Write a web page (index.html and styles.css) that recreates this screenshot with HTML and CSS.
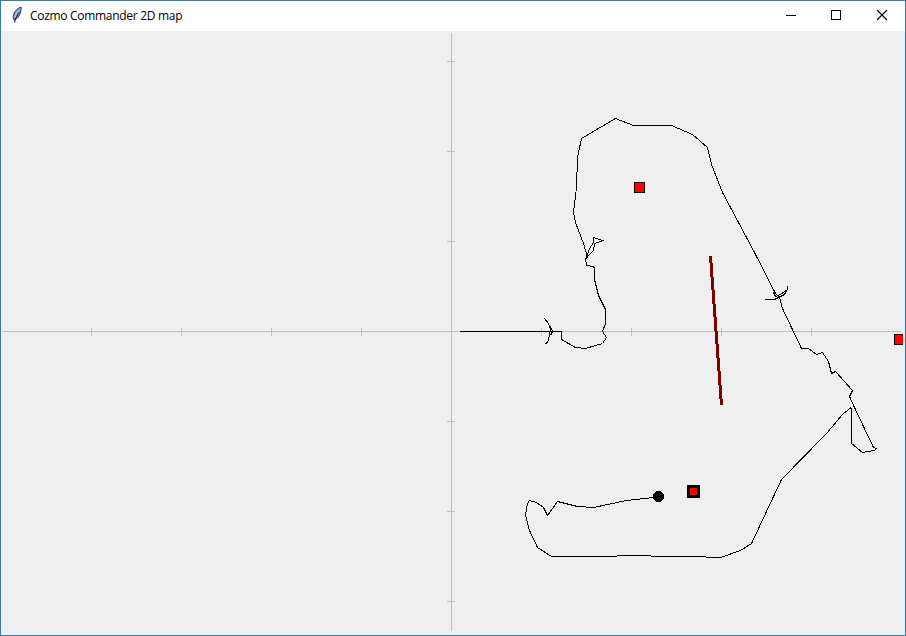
FILE: index.html
```html
<!DOCTYPE html>
<html lang="en">
<head>
<meta charset="utf-8">
<title>Cozmo Commander 2D map</title>
<link rel="stylesheet" href="styles.css">
</head>
<body>
<div class="window">
  <header class="titlebar">
    <svg class="feather" width="12" height="18" viewBox="0 0 12 18">
      <path d="M10.2 1.2C7.5 1.6 4 4.5 2.6 8.3C1.9 10.5 2.2 12.6 3.2 14.2C6.5 12.8 8.8 9.6 9.5 6C9.8 4.5 10.5 3 10.2 1.2Z" fill="#6f9bd2" stroke="#1b2740" stroke-width="0.9"/>
      <path d="M8.8 3C6.3 5.4 4.6 8.5 3.7 12" fill="none" stroke="#b4cce8" stroke-width="1.2"/>
      <path d="M8.2 6.2C6.6 8.5 4.4 11.6 3.6 16.5" fill="none" stroke="#10131c" stroke-width="1"/>
    </svg>
    <h1 class="title">Cozmo Commander 2D map</h1>
    <div class="controls">
      <button class="control" aria-label="Minimize"><svg width="12" height="12" viewBox="0 0 12 12"><path d="M2 6.5H12" shape-rendering="crispEdges"/></svg></button>
      <button class="control" aria-label="Maximize"><svg width="12" height="12" viewBox="0 0 12 12"><path d="M1.5 1.5H10.5V10.5H1.5Z" shape-rendering="crispEdges"/></svg></button>
      <button class="control" aria-label="Close"><svg width="12" height="12" viewBox="0 0 12 12"><path d="M1 1L11 11M11 1L1 11"/></svg></button>
    </div>
  </header>
  <svg class="map" width="904" height="604" viewBox="1 31 904 604" shape-rendering="crispEdges">
    <g transform="translate(.5 .5)" fill="none">
      <path class="axis" d="M1.500 331H900.500M451 32.500V630M91 327V335M181 327V335M271 327V335M361 327V335M541 327V335M631 327V335M721 327V335M811 327V335M446.500 61H454.500M446.500 151H454.500M446.500 241H454.500M446.500 421H454.500M446.500 511H454.500M446.500 601H454.500"/>
      <path class="trail" d="M459.500 331H561V339L575 347L585 348L602 343L606 337L602 331L605 323V309L598 295L594 279V267L592 266L586 265L585 258L587 257L583 243L575 222L573 212L576 187L577 157L581 138L615 118L633 125H671L692 134L707 147L711 164L722 192L754 252L775 293L779 297L782 308L801 348L808 348L816 354L822 352L828 361L831 373L835 371L852 390L849 396L854 407L873 447L876 448L874 450L862 452L851 443L850.500 407L842 414L826 433L781 479L751 543L740 550L720 557L690 556H667L634 555L600 556H551L537 547L529 530L525 515L527 503L529 500L536 502L543 507L547 515L557 501L577 506L593 507L626 500L653 497"/>
      <path class="trail" d="M544 318L548 323L550 329L549 335L547 342L545 343M550 326L552 331L550 335"/>
      <path class="trail" d="M586 257L589 248L593 242V237L602.500 240L594 243L593 250L587 256"/>
      <path class="trail" d="M764.500 299H774L784 294L787 289V285V289L780 294L775 296L773 292"/>
      <path class="wall" d="M710 255.500L721 404.500"/>
      <rect class="cube" x="634" y="182" width="10" height="10"/>
      <path class="cube" d="M903 334H894V344H903"/>
      <rect class="cube selected" x="688" y="486" width="10" height="10"/>
    </g>
    <circle class="robot" cx="658.500" cy="496.500" r="5.500"/>
    <rect class="edge" x="903" y="332" width="2" height="14"/>
  </svg>
</div>
</body>
</html>
```
FILE: styles.css
```css
* { box-sizing: border-box; }
body { margin: 0; }
.window {
  width: 906px;
  height: 636px;
  border: 1px solid #367cb4;
  background: #efefef;
  overflow: hidden;
}
.titlebar {
  display: flex;
  align-items: center;
  height: 30px;
  padding-left: 10px;
  background: #fff;
}
.feather { flex: none; margin-top: -2px; }
.title {
  margin: -1px auto 0 7px;
  font: 400 12px "Open Sans", "Noto Sans", sans-serif;
  letter-spacing: -0.3px;
  white-space: nowrap;
  color: #000;
}
.controls { display: flex; }
.control {
  display: flex;
  align-items: center;
  justify-content: center;
  width: 46px;
  height: 30px;
  padding: 0 0 2px;
  border: 0;
  background: none;
}
.control path { fill: none; stroke: #000; stroke-width: 1.1; }
.map { display: block; }
.axis { stroke: #bebebe; }
.trail { stroke: #000; }
.wall { stroke: #800000; stroke-width: 3; }
.cube { fill: #f00; stroke: #000; }
.selected { stroke-width: 3; }
.robot { fill: #000; }
.edge { fill: #efefef; }
```
